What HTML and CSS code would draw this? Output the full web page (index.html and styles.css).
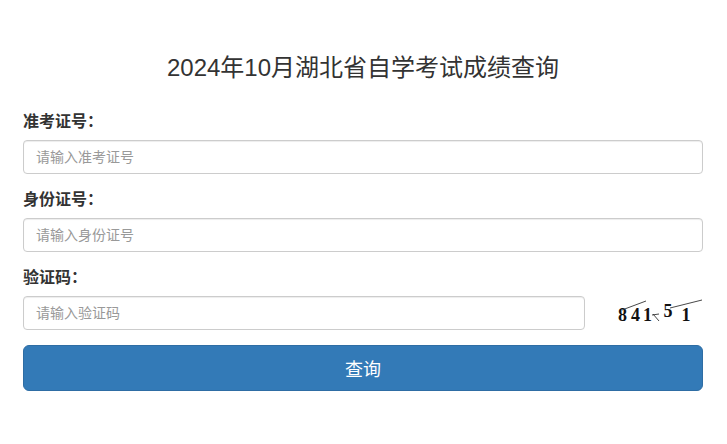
FILE: index.html
```html
<!DOCTYPE html>
<html lang="zh-CN">
<head>
<meta charset="utf-8">
<title>2024年10月湖北省自学考试成绩查询</title>
<link rel="stylesheet" href="styles.css">
</head>
<body>
<div class="page">
  <h3 class="title">2024年10月湖北省自学考试成绩查询</h3>
  <form class="form">
    <div class="field">
      <label class="label">准考证号：</label>
      <input class="input" type="text" placeholder="请输入准考证号">
    </div>
    <div class="field">
      <label class="label">身份证号：</label>
      <input class="input" type="text" placeholder="请输入身份证号">
    </div>
    <div class="field">
      <label class="label">验证码：</label>
      <div class="captcha-row">
        <input class="input input-code" type="text" placeholder="请输入验证码">
        <div class="captcha">
          <svg width="102" height="34" viewBox="0 0 102 34">
            <g font-family="Liberation Serif, serif" font-weight="bold" font-size="18" fill="#111">
              <text x="17" y="25">8</text>
              <text x="30" y="25">4</text>
              <text x="42" y="25">1</text>
              <text x="62.5" y="21">5</text>
              <text x="80.5" y="25">1</text>
            </g>
            <g stroke="#333" stroke-width="0.9" fill="none">
              <line x1="21" y1="14" x2="45" y2="5"/>
              <line x1="51" y1="19" x2="58" y2="18"/>
              <line x1="52" y1="18" x2="58" y2="25"/>
              <line x1="69" y1="12" x2="101" y2="4"/>
            </g>
          </svg>
        </div>
      </div>
    </div>
    <button class="btn" type="button">查询</button>
  </form>
</div>
</body>
</html>
```
FILE: styles.css
```css
* { box-sizing: border-box; }
html, body {
  margin: 0;
  padding: 0;
  background: #fff;
}
body {
  font-family: "Liberation Sans", Arial, "Noto Sans CJK SC", sans-serif;
  color: #333;
}
.page {
  padding: 0 24px 0 23px;
}
.title {
  margin: 55px 0 0;
  font-size: 24px;
  line-height: 26px;
  font-weight: normal;
  text-align: center;
  color: #333;
}
.form {
  margin-top: 31px;
  display: flex;
  flex-direction: column;
  gap: 16px;
}
.field {
  display: flex;
  flex-direction: column;
  gap: 8px;
}
.label {
  display: block;
  font-size: 16px;
  line-height: 20px;
  font-weight: bold;
  color: #333;
}
.input {
  display: block;
  width: 100%;
  height: 34px;
  padding: 6px 12px;
  font-family: inherit;
  font-size: 14px;
  color: #555;
  background: #fff;
  border: 1px solid #ccc;
  border-radius: 4px;
  box-shadow: inset 0 1px 1px rgba(0,0,0,0.075);
  outline: none;
}
.input::placeholder {
  color: #999;
}
.captcha-row {
  display: flex;
  align-items: center;
  height: 34px;
}
.input-code {
  width: 562px;
  flex: 0 0 562px;
}
.captcha {
  flex: 1;
  display: flex;
  justify-content: flex-end;
}
.captcha svg {
  display: block;
}
.btn {
  display: block;
  width: 100%;
  height: 46px;
  margin-top: -1px;
  font-family: inherit;
  font-size: 18px;
  color: #fff;
  background: #337ab7;
  border: 1px solid #2e6da4;
  border-radius: 6px;
  cursor: pointer;
}
```
